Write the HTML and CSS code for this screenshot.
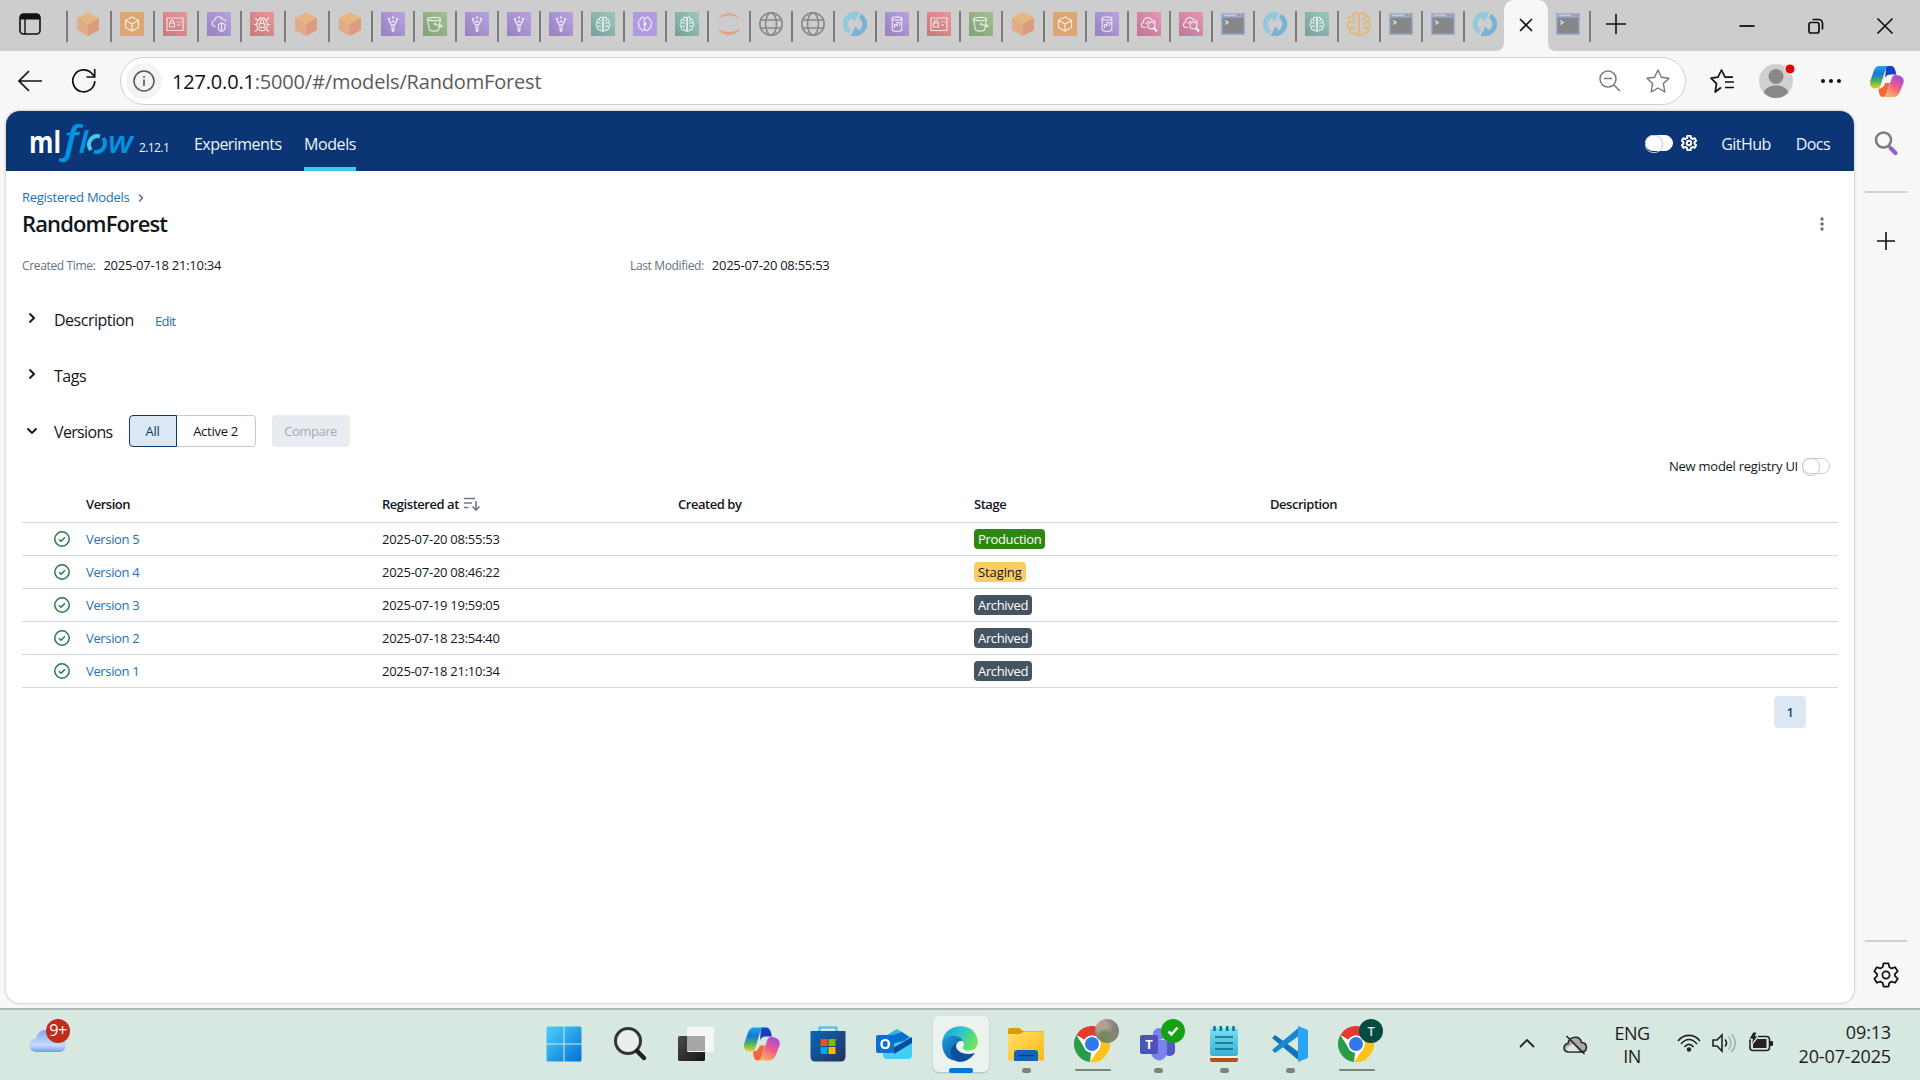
FILE: index.html
```html
<!DOCTYPE html>
<html lang="en">
<head>
<meta charset="utf-8">
<title>RandomForest - MLflow Model</title>
<link rel="stylesheet" href="styles.css">
</head>
<body>
<svg class="sprite" aria-hidden="true">
  <defs>
    <linearGradient id="g-purple" x1="0" y1="1" x2="1" y2="0"><stop offset="0" stop-color="#9580bd"/><stop offset="1" stop-color="#bba3e2"/></linearGradient>
    <linearGradient id="g-red" x1="0" y1="1" x2="1" y2="0"><stop offset="0" stop-color="#c8757c"/><stop offset="1" stop-color="#e79a9b"/></linearGradient>
    <linearGradient id="g-green" x1="0" y1="1" x2="1" y2="0"><stop offset="0" stop-color="#819f77"/><stop offset="1" stop-color="#a5c28f"/></linearGradient>
    <linearGradient id="g-teal" x1="0" y1="1" x2="1" y2="0"><stop offset="0" stop-color="#779f99"/><stop offset="1" stop-color="#9bc8be"/></linearGradient>
    <linearGradient id="g-pink" x1="0" y1="1" x2="1" y2="0"><stop offset="0" stop-color="#c07498"/><stop offset="1" stop-color="#e39ab4"/></linearGradient>
    <linearGradient id="g-win" x1="0" y1="0" x2="1" y2="1"><stop offset="0" stop-color="#4fd0ff"/><stop offset="1" stop-color="#0072d2"/></linearGradient>
    <linearGradient id="g-cpl" x1="0" y1="0" x2="0" y2="1"><stop offset="0" stop-color="#1ea7e8"/><stop offset=".35" stop-color="#1677d8"/><stop offset=".65" stop-color="#43b06c"/><stop offset="1" stop-color="#f4d01c"/></linearGradient>
    <linearGradient id="g-cpr" x1=".8" y1="0" x2=".3" y2="1"><stop offset="0" stop-color="#a049e8"/><stop offset=".5" stop-color="#f0598c"/><stop offset="1" stop-color="#ffb357"/></linearGradient>
    <linearGradient id="g-edge" x1="0" y1="0" x2="1" y2=".5"><stop offset="0" stop-color="#1e9fe0"/><stop offset=".5" stop-color="#2cc3d2"/><stop offset="1" stop-color="#6be556"/></linearGradient>
    <linearGradient id="g-edge2" x1="0" y1="0" x2="1" y2="1"><stop offset="0" stop-color="#1b9de2"/><stop offset="1" stop-color="#0c4c96"/></linearGradient>
    <linearGradient id="g-store" x1="0" y1="0" x2="1" y2="1"><stop offset="0" stop-color="#0a67bd"/><stop offset="1" stop-color="#27305a"/></linearGradient>
    <linearGradient id="g-folder" x1="0" y1="0" x2="1" y2="1"><stop offset="0" stop-color="#ffdf6b"/><stop offset="1" stop-color="#fdb913"/></linearGradient>
    <linearGradient id="g-dark" x1="0" y1="0" x2="1" y2="1"><stop offset="0" stop-color="#4c4b48"/><stop offset="1" stop-color="#151515"/></linearGradient>
    <linearGradient id="g-cloud" x1="0" y1="0" x2="0" y2="1"><stop offset="0" stop-color="#7fa7ee"/><stop offset=".7" stop-color="#c7daf8"/><stop offset="1" stop-color="#6f9df0"/></linearGradient>
    <linearGradient id="g-note" x1="0" y1="0" x2="0" y2="1"><stop offset="0" stop-color="#7ddff2"/><stop offset="1" stop-color="#36b2d0"/></linearGradient>
    <g id="lobe"><path d="M12 6.500C11.500 4.500 8.500 4.500 8.300 7 6 7 5.300 9.300 6.500 10.700 4.600 11.500 4.600 14 6.400 14.800 5.800 17.200 8 18.500 9.300 17.600 10 20 12 19.500 12 18ZM8.300 7C8.300 8.500 9.300 9 10.200 8.800M6.500 10.700C8 10.200 9.500 11 9.300 12.500M6.400 14.800C7.500 13.500 9 14 9.600 15.200"/></g>
  </defs>
  <symbol id="cube" viewBox="0 0 24 24"><path fill="#e4b681" d="M12 0 23 6 12 12 1 6Z"/><path fill="#e0ab86" d="M1 6 12 12V24L1 18Z"/><path fill="#dc9b7f" d="M23 6 12 12V24L23 18Z"/></symbol>
  <symbol id="box" viewBox="0 0 24 24"><path fill="#dca572" d="M0 0H24V24H0Z"/><path class="w" d="M12 5 18.500 8.300V15.500L12 19 5.500 15.500V8.300ZM5.500 8.300 12 12l6.500-3.700M12 12v7"/></symbol>
  <symbol id="card" viewBox="0 0 24 24"><path fill="url(#g-red)" d="M0 0H24V24H0Z"/><path class="w" d="M4 6H20V18.500H4ZM6.500 11H11.500V15H6.500ZM7.500 11V9.500a1.500 1.500 0 0 1 3 0V11M14 10h1.500M16.500 10H18M14 13h3"/></symbol>
  <symbol id="cloudp" viewBox="0 0 24 24"><path fill="url(#g-purple)" d="M0 0H24V24H0Z"/><path class="w" d="M8.500 14.500C4 14 4 9 7.500 8.500 8 4 14.500 3.500 15.500 7.500 18 7.500 19 8.500 19 10M11.500 12.500 14.500 11 18 12.500V16c0 2-2 3-3.300 3.500C13 19 11.500 18 11.500 16ZM14.600 11V19"/></symbol>
  <symbol id="bug" viewBox="0 0 24 24"><path fill="url(#g-red)" d="M0 0H24V24H0Z"/><path class="w" d="M9.500 11.500H14.500V15.500H9.500ZM10.500 11.500V9.500a1.500 1.500 0 0 1 3 0v2"/><ellipse class="w" cx="12" cy="12.500" rx="5.300" ry="6.300"/><path class="w" d="M5 6 8 8.500M19 5.500 16 8.500M5 19.500 8 17M19 19.500 16 17M4 12.500H6.500M17.500 12.500H20M10 5V6.500M14 5V6.500"/></symbol>
  <symbol id="glue" viewBox="0 0 24 24"><path fill="url(#g-purple)" d="M0 0H24V24H0Z"/><path class="w" d="M7.500 8 11 14V17H13V14L16.500 8M9 10h6M10.500 12.500h3"/><g fill="#e6e0ef"><circle cx="8" cy="7" r="1.300"/><circle cx="12" cy="5.500" r="1.200"/><circle cx="16" cy="7" r="1.300"/><circle cx="12" cy="9" r="1"/><circle cx="12" cy="18.500" r="1.500"/></g></symbol>
  <symbol id="bucket" viewBox="0 0 24 24"><path fill="url(#g-green)" d="M0 0H24V24H0Z"/><ellipse class="w" cx="11" cy="7" rx="6.500" ry="1.700"/><path class="w" d="M4.500 7 6.500 18c2 1.500 7 1.500 9 0L17.500 7M12 12l6 2.500c2 .5 1-1-1-2"/><circle cx="12" cy="12" r="1.200" fill="#e6ebe2"/></symbol>
  <symbol id="brain" viewBox="0 0 24 24"><path fill="url(#g-teal)" d="M0 0H24V24H0Z"/><use href="#lobe" class="w"/><use href="#lobe" class="w" transform="matrix(-1 0 0 1 24 0)"/></symbol>
  <symbol id="braino" viewBox="0 0 24 24"><g transform="translate(-7.800 -7.200) scale(1.650 1.600)" fill="none" stroke="#e2b77c" stroke-width="1.100"><use href="#lobe"/><use href="#lobe" transform="matrix(-1 0 0 1 24 0)"/></g></symbol>
  <symbol id="brain2" viewBox="0 0 24 24"><path fill="#b29ae4" d="M0 0H24V24H0Z"/><path class="w" d="M11.500 7C11 4 7.500 5 7.500 7.500 5 8.500 5 11.500 6 12.500 5 15 7 16.500 8 16.500 8.500 19.500 11.500 19 11.500 17V7M12.500 7C13 4 16.500 5 16.500 7.500 19 8.500 19 11.500 18 12.500 19 15 17 16.500 16 16.500 15.500 19.500 12.500 19 12.500 17"/><circle cx="12" cy="12" r="1.700" fill="#eee8fa"/></symbol>
  <symbol id="jup" viewBox="0 0 24 24"><path fill="#dea583" d="M1 7.500C4-1 20-1 23 7.500 17 2 7 2 1 7.500ZM1 16.500C4 25 20 25 23 16.500 17 21 7 21 1 16.500Z"/></symbol>
  <symbol id="globe" viewBox="0 0 24 24"><g fill="none" stroke="#858585" stroke-width="1.500"><circle cx="12" cy="12" r="11.200"/><ellipse cx="12" cy="12" rx="5.500" ry="11.200"/><path d="M2 8H22M2 16H22"/></g></symbol>
  <symbol id="sync" viewBox="0 0 24 24"><path fill="none" stroke="#8fc9db" stroke-width="5" d="M7 20.200A9.500 9.500 0 0 1 12.500 2.500"/><path fill="#8fc9db" d="M9 0H16.500L11.500 9.500 8.500 6Z"/><path fill="none" stroke="#79b2d6" stroke-width="5" d="M17 3.800A9.500 9.500 0 0 1 11.500 21.500"/><path fill="#79b2d6" d="M15 24H7.500L12.500 14.500 15.500 18Z"/></symbol>
  <symbol id="db" viewBox="0 0 24 24"><path fill="url(#g-purple)" d="M0 0H24V24H0Z"/><ellipse class="w" cx="12" cy="6.500" rx="4.800" ry="1.600"/><path class="w" d="M7.200 6.500V18c2 2 7.500 2 9.600 0V6.500M9.500 16V12.500L12 13.500V10.500H15L14.500 14"/></symbol>
  <symbol id="csearch" viewBox="0 0 24 24"><path fill="url(#g-pink)" d="M0 0H24V24H0Z"/><path class="w" d="M9.500 15.500H7C3.500 15 3.500 11 6.500 10.500 6 5.500 13 4 14.500 8c2 0 4 1 4 3M12 9a4 4 0 0 0-3 3"/><circle class="w" cx="14.500" cy="13.500" r="3.400"/><path class="w2" d="m17 16 3 3.500"/></symbol>
  <symbol id="term" viewBox="0 0 24 24"><path fill="#9aaecd" d="M0 1H24V23H0Z"/><path fill="#878787" d="M1.500 5.500H22.500V21.500H1.500Z"/><path d="M3 3.200H15" stroke="#bfc9dc" stroke-width="1.500"/><path d="M16 3.200h3M20 3.200h2.500" stroke="#c98a92" stroke-width="2"/><path d="M4 8.500 7 10.500 4 12.500" fill="none" stroke="#ddd" stroke-width="1.500"/></symbol>
  <symbol id="copilot" viewBox="0 0 36 33"><path fill="#153fc4" d="M17 0H22C25 0 26 2 27 5L28 9H22C19 9 17 10 16 13Z"/><path fill="url(#g-cpl)" d="M10 0H20C17 1 16 4 15 8L11.500 20C10.500 23 9 24 6 24 1 24-1 20 .500 15L4 5C5 2 7 0 10 0Z"/><path fill="#f5683c" d="M9 24C13 24 15 21 16 18H21L17 31C16.500 32 15 33 13.500 33 10 33 9.500 29 9 24Z"/><path fill="url(#g-cpr)" d="M27 9.500C33 9.500 37 13 35.500 18L31.500 28C30 31.500 28 33 25 33H14C17 32 18 29 19.500 24L23 13C24 10.500 25 9.500 27 9.500Z"/></symbol>
  <symbol id="chrome" viewBox="0 0 36 36"><circle cx="18" cy="18" r="18" fill="#fff"/><path fill="#e33b2e" d="M18 18 2.400 9A18 18 0 0 1 33.600 9Z"/><path fill="#2a9b48" d="M18 18 16 36A18 18 0 0 1 2.400 9L10 21Z"/><path fill="#fcc31d" d="M25 9H33.600A18 18 0 0 1 16 36L25.500 22Z"/><circle cx="18" cy="18" r="8.800" fill="#fff"/><circle cx="18" cy="18" r="7" fill="#3078ec"/></symbol>
  <symbol id="check" viewBox="0 0 16 16"><g fill="none" stroke="#277c43" stroke-width="1.500"><circle cx="8" cy="8" r="7.200"/><path d="m5 8.200 2 2 4-4"/></g></symbol>
  <symbol id="right" viewBox="0 0 16 16"><path d="m5.500 3.500 4.500 4.500-4.500 4.500" fill="none" stroke="currentColor" stroke-width="1.900"/></symbol>
  <symbol id="gear" viewBox="0 0 24 24"><path d="M9.700 1.200H14.300L15 4.600 17.200 5.900 20.500 4.800 22.800 8.700 20.300 11V13L22.800 15.300 20.500 19.200 17.200 18.100 15 19.400 14.300 22.800H9.700L9 19.400 6.800 18.100 3.500 19.200 1.200 15.300 3.700 13V11L1.200 8.700 3.500 4.800 6.800 5.900 9 4.600Z" stroke-linejoin="round"/><circle cx="12" cy="12" r="3.300"/></symbol>
</svg>

<header class="tabstrip">
  <svg class="workspace" viewBox="0 0 22 22"><rect x="1" y="1" width="20" height="20" rx="3.500" fill="none" stroke="#111" stroke-width="1.600"/><path d="M1 4.500A3.500 3.500 0 0 1 4.500 1H17.500A3.500 3.500 0 0 1 21 4.500V6.500H1Z" fill="#111"/><path d="M6 6V21" stroke="#111" stroke-width="1.400"/></svg>
  <div class="tabs wide">
    <i><svg><use href="#cube"/></svg></i><i><svg><use href="#box"/></svg></i><i><svg><use href="#card"/></svg></i><i><svg><use href="#cloudp"/></svg></i><i><svg><use href="#bug"/></svg></i><i><svg><use href="#cube"/></svg></i><i><svg><use href="#cube"/></svg></i>
  </div>
  <div class="tabs">
    <i><svg><use href="#glue"/></svg></i><i><svg><use href="#bucket"/></svg></i><i><svg><use href="#glue"/></svg></i><i><svg><use href="#glue"/></svg></i><i><svg><use href="#glue"/></svg></i><i><svg><use href="#brain"/></svg></i><i><svg><use href="#brain2"/></svg></i><i><svg><use href="#brain"/></svg></i><i><svg><use href="#jup"/></svg></i><i><svg><use href="#globe"/></svg></i><i><svg><use href="#globe"/></svg></i><i><svg><use href="#sync"/></svg></i><i><svg><use href="#db"/></svg></i><i><svg><use href="#card"/></svg></i><i><svg><use href="#bucket"/></svg></i><i><svg><use href="#cube"/></svg></i><i><svg><use href="#box"/></svg></i><i><svg><use href="#db"/></svg></i><i><svg><use href="#csearch"/></svg></i><i><svg><use href="#csearch"/></svg></i><i><svg><use href="#term"/></svg></i><i><svg><use href="#sync"/></svg></i><i><svg><use href="#brain"/></svg></i><i><svg><use href="#braino"/></svg></i><i><svg><use href="#term"/></svg></i><i><svg><use href="#term"/></svg></i><i><svg><use href="#sync"/></svg></i>
  </div>
  <div class="active-tab"><svg viewBox="0 0 60 51"><path d="M0 51C6 51 8 47 8 41V12C8 4 12 0 19 0H41C48 0 52 4 52 12V41C52 47 54 51 60 51Z" fill="#f7f7f7"/><path d="m24 19 12 12M36 19 24 31" stroke="#111" stroke-width="1.600"/></svg></div>
  <div class="tabs last"><i><svg><use href="#term"/></svg></i></div>
  <svg class="newtab" viewBox="0 0 20 20"><path d="M10 0V20M0 10H20" stroke="#111" stroke-width="1.600"/></svg>
  <div class="winctl">
    <svg viewBox="0 0 16 16"><path d="M.500 8H15.500" stroke="#111" stroke-width="1.800"/></svg>
    <svg viewBox="0 0 16 16"><rect x="1" y="4.500" width="10" height="10.500" rx="2" fill="none" stroke="#111" stroke-width="1.700"/><path d="M4.500 1.500H10.500A4 4 0 0 1 14.500 5.500V11.500" fill="none" stroke="#111" stroke-width="1.700"/></svg>
    <svg viewBox="0 0 16 16"><path d="m.500.500 15 15M15.500.500.500 15.500" stroke="#111" stroke-width="1.700"/></svg>
  </div>
</header>

<div class="toolbar">
  <svg class="back" viewBox="0 0 24 22"><path d="M24 11H1M11 1 1 11 11 21" fill="none" stroke="#111" stroke-width="1.700"/></svg>
  <svg class="reload" viewBox="0 0 24 24"><path d="M22.800 12A11 11 0 1 1 19.500 4L22.500 7.500M22.700 0V8H14.500" fill="none" stroke="#111" stroke-width="1.700"/></svg>
  <div class="address">
    <span class="info"><svg viewBox="0 0 22 22"><circle cx="11" cy="11" r="10" fill="none" stroke="#555" stroke-width="1.500"/><path d="M11 9.500V16M11 6V7.800" stroke="#555" stroke-width="1.600"/></svg></span>
    <span class="url"><b>127.0.0.1</b>:5000/#/models/RandomForest</span>
    <svg class="zoomout" viewBox="0 0 22 22"><circle cx="9" cy="9" r="8" fill="none" stroke="#777" stroke-width="1.500"/><path d="M5 8.500H13M14.500 14.500 21 21" stroke="#777" stroke-width="1.500"/></svg>
    <svg class="star" viewBox="0 0 24 24"><path d="m12 1 3.400 7.200 7.600 1-5.600 5.400L18.800 23 12 19 5.200 23 6.600 14.600 1 9.200l7.600-1Z" fill="none" stroke="#777" stroke-width="1.400" stroke-linejoin="round"/></svg>
  </div>
  <svg class="favs" viewBox="0 0 24 24"><path d="M11 18.500 5.200 23 6.500 14.600 1 9.200l7-1L11.500 1 15 8.200H23M15 13H24M15 18.500H24" fill="none" stroke="#111" stroke-width="1.700" stroke-linejoin="round"/></svg>
  <svg class="avatar" viewBox="0 0 38 38"><circle cx="17" cy="21" r="17" fill="#d2d0ce"/><circle cx="17" cy="16.500" r="7.500" fill="#8a8886"/><path d="M5 33C6 23 28 23 29 33A17 17 0 0 1 5 33Z" fill="#8a8886"/><circle cx="31" cy="9" r="5" fill="#e60000" stroke="#f7f7f7" stroke-width="1"/></svg>
  <svg class="dots" viewBox="0 0 20 4"><g fill="#111"><circle cx="2" cy="2" r="2"/><circle cx="10" cy="2" r="2"/><circle cx="18" cy="2" r="2"/></g></svg>
  <svg class="cop"><use href="#copilot"/></svg>
</div>

<div class="middle">
  <main class="page">
    <nav class="mlnav">
      <svg class="logo" viewBox="0 0 108 44"><text class="lt" x="0" y="34" textLength="32" lengthAdjust="spacingAndGlyphs">ml</text><text class="lt fl" x="35" y="34" textLength="24" lengthAdjust="spacingAndGlyphs"><tspan class="f">f</tspan><tspan>l</tspan></text><text class="lt fl" x="79" y="34" textLength="25" lengthAdjust="spacingAndGlyphs">w</text><g fill="none" stroke-width="4"><path d="M62 31A8.500 8.500 0 0 1 71 17.500" stroke="#43c9ed"/><path d="M74 19A8.500 8.500 0 0 1 65 32.500" stroke="#0194e2"/></g></svg>
      <span class="ver">2.12.1</span>
      <a class="navlink exp">Experiments</a>
      <a class="navlink on">Models</a>
      <span class="grow"></span>
      <span class="switch solid"></span>
      <svg class="navgear"><use href="#gear"/></svg>
      <a class="navlink gh">GitHub</a>
      <a class="navlink docs">Docs</a>
    </nav>
    <div class="content">
      <div class="crumb"><a>Registered Models</a><svg><use href="#right"/></svg></div>
      <div class="titlebar"><h1>RandomForest</h1><svg class="kebab" viewBox="0 0 4 14"><g fill="#5f7281"><circle cx="2" cy="2" r="1.700"/><circle cx="2" cy="7" r="1.700"/><circle cx="2" cy="12" r="1.700"/></g></svg></div>
      <div class="meta">
        <div><span class="lab">Created Time:</span><span>2025-07-18 21:10:34</span></div>
        <div><span class="lab">Last Modified:</span><span>2025-07-20 08:55:53</span></div>
      </div>
      <section class="fold"><svg><use href="#right"/></svg><span class="ft">Description</span><a class="edit">Edit</a></section>
      <section class="fold"><svg><use href="#right"/></svg><span class="ft">Tags</span></section>
      <section class="fold open"><svg><use href="#right"/></svg><span class="ft">Versions</span>
        <div class="seg"><span class="sel">All</span><span>Active 2</span></div>
        <span class="compare">Compare</span></section>
      <div class="registry"><span>New model registry UI</span><span class="switch"></span></div>
      <div class="table">
        <div class="row head"><span></span><span>Version</span><span>Registered at<svg class="sort" viewBox="0 0 16 14"><path d="M0 1.500H11M0 6H8M0 10.500H4.500M12 4V12.500M8.500 9.500 12 13 15.500 9.500" fill="none" stroke="#6b7d8c" stroke-width="1.600"/></svg></span><span>Created by</span><span>Stage</span><span>Description</span></div>
        <div class="row"><svg><use href="#check"/></svg><a>Version 5</a><span>2025-07-20 08:55:53</span><span></span><span><mark class="prod">Production</mark></span></div>
        <div class="row"><svg><use href="#check"/></svg><a>Version 4</a><span>2025-07-20 08:46:22</span><span></span><span><mark class="stag">Staging</mark></span></div>
        <div class="row"><svg><use href="#check"/></svg><a>Version 3</a><span>2025-07-19 19:59:05</span><span></span><span><mark>Archived</mark></span></div>
        <div class="row"><svg><use href="#check"/></svg><a>Version 2</a><span>2025-07-18 23:54:40</span><span></span><span><mark>Archived</mark></span></div>
        <div class="row"><svg><use href="#check"/></svg><a>Version 1</a><span>2025-07-18 21:10:34</span><span></span><span><mark>Archived</mark></span></div>
      </div>
      <div class="pager"><span>1</span></div>
    </div>
  </main>
  <aside class="side">
    <svg class="sfind" viewBox="0 0 24 24"><path d="m15 15 2 3" stroke="#777" stroke-width="3"/><circle cx="9.500" cy="9" r="7.500" fill="#fafafa" stroke="#7d7d7d" stroke-width="2.600"/><path d="m17 17.500 4.500 4.500" stroke="#9260cc" stroke-width="4.200" stroke-linecap="round"/></svg>
    <hr>
    <svg class="splus" viewBox="0 0 18 18"><path d="M9 0V18M0 9H18" stroke="#111" stroke-width="1.600"/></svg>
    <span class="grow"></span>
    <hr class="low">
    <svg class="sgear"><use href="#gear"/></svg>
  </aside>
</div>

<footer class="taskbar">
  <div class="weather"><svg viewBox="0 0 38 36"><path fill="url(#g-cloud)" d="M7 35C-2 34-2 22 7 21.500 9 11 23 9 27 20 39 18 40 34 31 35Z"/></svg><span>9+</span></div>
  <div class="apps">
    <i><svg viewBox="0 0 36 36"><path fill="url(#g-win)" d="M2 .500H17.500V17.500H.500V2A1.500 1.500 0 0 1 2 .500ZM18.500.500H34A1.500 1.500 0 0 1 35.500 2V17.500H18.500ZM.500 18.500H17.500V35.500H2A1.500 1.500 0 0 1 .500 34ZM18.500 18.500H35.500V34A1.500 1.500 0 0 1 34 35.500H18.500Z"/></svg></i>
    <i><svg viewBox="0 0 36 36"><circle cx="16" cy="15" r="12.500" fill="#e6efeb" stroke="#333" stroke-width="3"/><path d="m25 25 7 7" stroke="#222" stroke-width="4.500" stroke-linecap="round"/></svg></i>
    <i><svg viewBox="0 0 36 36"><rect x="0" y="10" width="27" height="25" rx="1.500" fill="url(#g-dark)"/><rect x="9" y="1" width="27" height="25" rx="1" fill="#f5f6f6"/><path fill="#a5a6a5" d="M9 10H27V25H9Z"/></svg></i>
    <i><svg><use href="#copilot"/></svg></i>
    <i><svg viewBox="0 0 36 36"><path d="M9.500 8V1.500H26.500V8" fill="none" stroke="#32c1f2" stroke-width="2"/><path fill="url(#g-store)" d="M.500 5H35.500V31A4.500 4.500 0 0 1 31 35.500H5A4.500 4.500 0 0 1 .500 31Z"/><path fill="#f25022" d="M10.500 13H17.500V20H10.500Z"/><path fill="#7fba00" d="M18.500 13H25.500V20H18.500Z"/><path fill="#00a4ef" d="M10.500 21H17.500V28H10.500Z"/><path fill="#ffb900" d="M18.500 21H25.500V28H18.500Z"/></svg></i>
    <i><svg viewBox="0 0 36 36"><path fill="#32b5ea" d="M6 12 21 3 35.500 12 20 22Z"/><path fill="#0a6fcb" d="m12 11 14-5 7 5-13 10Z"/><path fill="#45cdf5" d="M7 20 36 13V29A4 4 0 0 1 32 33H10A4 4 0 0 1 7 29Z"/><path fill="#0b4a9e" d="M17 22 36 11V17L18 28Z"/><rect y="9" width="18" height="18" rx="2" fill="#0f6fce"/><text x="9" y="23" class="ico" font-size="14">O</text></svg></i>
    <i class="cur"><svg viewBox="0 0 36 36"><path fill="url(#g-edge)" d="M.500 15C3-4 34-5 35.700 15 36 22 31 25.500 24 24.500 20 23.500 21 21 22 19 22 12 9 8 .500 15Z"/><path fill="url(#g-edge2)" d="M.500 14.500C6 7 18 9 21 15 13 13 10 28 21 31 16 36.500 9 35 5 31 1 26-.500 21 .500 14.500Z"/><path fill="#0c4f9c" d="M14 18C13 26 23 30 33 27 29 33 22 37 15 35.500 6 31 8 20 14 18Z"/></svg><u class="blue"></u></i>
    <i><svg viewBox="0 0 36 36"><path fill="#dd9a05" d="M0 4A2 2 0 0 1 2 2H11L15 5H34A2 2 0 0 1 36 7V10H0Z"/><path fill="url(#g-folder)" d="M0 8H12L16 5.500H36V34.500H0Z"/><path fill="#0f66b9" d="M6 35V27A3 3 0 0 1 9 24H27A3 3 0 0 1 30 27V35Z"/><path d="M10 29.500H26" stroke="#083f7d" stroke-width="1.500"/></svg><u></u></i>
    <i><svg><use href="#chrome"/></svg><b class="ph"></b><u class="line"></u></i>
    <i><svg viewBox="0 0 36 36"><circle cx="19" cy="8" r="6" fill="#7b83eb"/><rect x="24" y="14" width="11" height="16" rx="5" fill="#5059c9"/><path fill="#7b83eb" d="M11 14H27V25C27 38 11 37 11 25Z"/><rect y="9" width="18" height="19" rx="2" fill="#4b53bc"/><text x="9" y="23" class="ico" font-size="13">T</text></svg><b class="ok"><svg viewBox="0 0 24 24"><path d="m7.500 12.500 3 3 6-7" fill="none" stroke="#fff" stroke-width="2.500"/></svg></b><u></u></i>
    <i><svg viewBox="0 0 36 36"><path fill="#b55013" d="M4 31H32V34A2 2 0 0 1 30 36H6A2 2 0 0 1 4 34Z"/><path fill="#f2f2f2" d="M4 29H32V32H4Z"/><rect x="4" y="2" width="28" height="28" rx="2" fill="url(#g-note)"/><path d="M9 11H27M9 17H27M9 23H27" stroke="#086a8d" stroke-width="1.700"/><path d="M8.500 0V5M14.800 0V5M21.200 0V5M27.500 0V5" stroke="#1a6c8c" stroke-width="2.500"/></svg><u></u></i>
    <i><svg viewBox="0 0 36 36"><path fill="#0f72bd" d="M0 12 3 9 28 27V35.500Z"/><path fill="#1a86d2" d="M0 24 3 27 28 9V.500Z"/><path fill="#29a4f0" d="M26 0 36 4V32L26 36Z"/></svg><u></u></i>
    <i><svg><use href="#chrome"/></svg><b class="tt">T</b><u class="line"></u></i>
  </div>
  <div class="tray">
    <svg class="up" viewBox="0 0 16 10"><path d="m1 9 7-7 7 7" fill="none" stroke="#222" stroke-width="1.800"/></svg>
    <svg class="cl" viewBox="0 0 24 20"><path d="M5 17C-.500 16.500 0 9 5 8.500 6 1 17 0 18.500 7.500 25 8 25 16.500 19 17Z" fill="#a8aaa9" stroke="#222" stroke-width="1.500"/><path d="M3 13 10 9 16 16.200H5Z" fill="#e4e6e5"/><path d="m3.500 1 18 18" stroke="#222" stroke-width="1.600"/></svg>
    <div class="lang">ENG<br>IN</div>
    <svg class="wifi" viewBox="0 0 24 18"><g fill="none" stroke="#222" stroke-width="1.600"><path d="M1 7C7-.500 17-.500 23 7M4 10C9 4 15 4 20 10M7.500 13C10.500 9.500 13.500 9.500 16.500 13"/></g><circle cx="12" cy="15.500" r="2.200" fill="#222"/></svg>
    <svg class="vol" viewBox="0 0 26 20"><g fill="none" stroke="#222" stroke-width="1.600"><path d="M1 7H5L10 2V18L5 13H1ZM13 6.500Q16 10 13 13.500"/><g stroke="#a5b3ad"><path d="M16.500 3.500Q21.500 10 16.500 16.500M19.500 1Q27 10 19.500 19"/></g></g></svg>
    <svg class="bat" viewBox="0 0 24 20"><rect x="1" y="4.500" width="19.500" height="14" rx="3" fill="none" stroke="#222" stroke-width="1.600"/><path d="M4 16V12L8 7H17.500V16ZM21 9H23A1 1 0 0 1 24 10V13A1 1 0 0 1 23 14H21Z" fill="#222"/><path d="M4 0H8L6.500 4H9L2 13 3.500 7H0Z" fill="#222" stroke="#d7e8e1"/></svg>
    <div class="clock">09:13<br>20-07-2025</div>
  </div>
</footer>
</body>
</html>
```
FILE: styles.css
```css
* { box-sizing: border-box; }
body { margin: 0; width: 1920px; height: 1080px; overflow: hidden; display: flex; flex-direction: column; background: #f7f7f7; color: #11171c; font-family: "Open Sans", "Noto Sans", sans-serif; font-size: 13px; letter-spacing: -.26px; }
.sprite { position: absolute; width: 0; height: 0; }
svg { display: block; flex: none; overflow: visible; }
i { font-style: normal; }
.w { fill: none; stroke: #fff; stroke-opacity: .75; stroke-width: 1.2; }
.w2 { fill: none; stroke: #fff; stroke-opacity: .75; stroke-width: 2.4; }
.grow { flex: 1; }

.tabstrip { height: 51px; background: #cdcdcd; display: flex; align-items: flex-start; }
.workspace { width: 22px; height: 22px; margin: 13px 24px 0 19px; }
.tabs { display: flex; padding-top: 11px; }
.tabs i { width: 42px; height: 31px; border-left: 2px solid #7b7b7b; padding: 1px 0 0 8px; }
.tabs.wide { margin-left: 1px; }
.tabs.wide i { width: 43.6px; }
.tabs svg { width: 24px; height: 24px; }
.active-tab { width: 60px; height: 51px; margin: 0 0 0 -9px; }
.active-tab svg { width: 60px; height: 51px; }
.tabs.last i { border-left: 0; border-right: 2px solid #7b7b7b; padding-left: 0; width: 35px; }
.newtab { width: 20px; height: 20px; margin: 14px 0 0 15px; }
.winctl { flex: 1; display: flex; justify-content: flex-end; gap: 53px; padding: 18px 27px 0 0; }
.winctl svg { width: 16px; height: 16px; }

.toolbar { height: 60px; display: flex; align-items: center; }
.back { width: 24px; height: 22px; margin-left: 18px; }
.reload { width: 24px; height: 24px; margin-left: 30px; }
.address { width: 1566px; height: 48px; margin-left: 24px; background: #fff; border: 1.5px solid #d1d1d1; border-radius: 24px; display: flex; align-items: center; }
.info { width: 36px; height: 36px; border-radius: 18px; background: #f3f3f3; margin-left: 5px; display: flex; align-items: center; justify-content: center; }
.info svg { width: 22px; height: 22px; }
.url { margin-left: 10px; flex: 1; font-size: 20px; color: #5b5b5b; letter-spacing: -.18px; }
.url b { font-weight: 400; color: #111; }
.zoomout { width: 22px; height: 22px; }
.star { width: 24px; height: 24px; margin: 0 15px 0 25px; }
.favs { width: 24px; height: 24px; margin-left: 24px; }
.avatar { width: 38px; height: 38px; margin: -4px 0 0 25px; }
.dots { width: 20px; height: 4px; margin-left: 24px; }
.cop { width: 34px; height: 31px; margin-left: 29px; }

.middle { height: 897px; display: flex; }
.page { width: 1848px; height: 892px; margin-left: 6px; background: #fff; border-radius: 14px; overflow: hidden; box-shadow: 0 0 3px rgba(0,0,0,.3); }
.mlnav { height: 60px; background: #0b3574; color: #eef3fa; display: flex; align-items: stretch; }
.logo { width: 108px; height: 44px; margin: 8px 0 0 23px; }
.lt { font-family: "Open Sans", sans-serif; font-weight: 700; font-size: 31px; fill: #fff; letter-spacing: 0; }
.lt.fl { fill: #0194e2; font-style: italic; font-weight: 600; }
.lt .f { font-size: 38px; }
.ver { width: 30px; font-size: 12px; letter-spacing: -.6px; padding-top: 28px; margin-left: 2px; }
.navlink { font-size: 16px; line-height: 22px; padding-top: 22px; letter-spacing: -.55px; }
.exp { width: 86px; margin: 0 24px 0 25px; }
.on { width: 52px; border-bottom: 4px solid #43c9ed; letter-spacing: -.4px; }
.switch { width: 28px; height: 16px; border: 1px solid #c0cdd8; border-radius: 8px; background: #fff; display: block; }
.switch::before { content: ""; display: block; width: 16px; height: 16px; margin: -1px; border: 1px solid #c0cdd8; border-radius: 8px; }
.switch.solid { margin-top: 24px; border-color: #fff; }
.navgear { width: 16px; height: 16px; margin: 24px 24px 0 8px; fill: none; stroke: #fff; stroke-width: 3; }
.docs { margin: 0 24px 0 25px; }

.content { padding: 16px 16px 0 16px; }
a { color: #2272b4; }
.mlnav a { color: #eef3fa; }
.crumb { height: 20px; display: flex; align-items: center; gap: 5px; }
.crumb svg { width: 12px; height: 12px; margin-top: 2px; color: #5f7281; }
.titlebar { height: 32px; display: flex; align-items: center; justify-content: space-between; padding-right: 14px; }
h1 { font-size: 22px; font-weight: 600; margin: 0; letter-spacing: -.87px; }
.kebab { width: 4px; height: 14px; margin-top: 2px; }
.meta { display: grid; grid-template-columns: 608px 1fr; height: 20px; margin-top: 17px; line-height: 19px; }
.meta div { display: flex; gap: 8px; }
.lab { font-size: 12px; color: #5f7281; letter-spacing: -.35px; }
.fold { height: 32px; display: flex; align-items: center; margin-top: 24px; }
.meta + .fold { margin-top: 28px; }
.fold > svg { width: 16px; height: 16px; margin: -4px 14px 0 2px; }
.fold.open { margin-top: 23px; }
.fold.open > svg { transform: rotate(90deg); margin-top: 0; }
.ft { font-size: 16px; letter-spacing: -.5px; }
.open .ft { letter-spacing: -.65px; padding-top: 2px; }
.edit { margin: 2px 0 0 21px; letter-spacing: -.6px; }
.seg { display: flex; margin-left: 16px; }
.seg span { height: 32px; width: 79px; border: 1px solid #c0cdd8; border-left: 0; border-radius: 0 4px 4px 0; display: flex; align-items: center; justify-content: center; }
.seg .sel { width: 48px; border: 1px solid #0e3a66; border-radius: 4px 0 0 4px; background: #dbe7f2; color: #0e3a66; }
.compare { width: 78px; height: 32px; margin-left: 16px; background: #e8ebef; color: #a0acb8; border-radius: 4px; display: flex; align-items: center; justify-content: center; letter-spacing: -.45px; }
.registry { height: 20px; margin-top: 9px; padding-right: 8px; display: flex; justify-content: flex-end; align-items: center; gap: 4px; }
.registry span:first-child { margin-top: -1px; }
.row { height: 33px; border-bottom: 1px solid #d1d9e1; display: grid; grid-template-columns: 64px 296px 296px 296px 296px 1fr; align-items: center; }
.row a { letter-spacing: -.35px; }
.head { height: 47px; font-weight: 600; padding-top: 9px; letter-spacing: -.46px; }
.head span { display: flex; align-items: center; gap: 5px; }
.row > svg { width: 16px; height: 16px; margin-left: 32px; }
.sort { width: 16px; height: 14px; }
.row > span > mark { display: inline-block; vertical-align: middle; height: 20px; line-height: 20px; padding: 0 4px; border-radius: 4px; background: #445461; color: #fff; letter-spacing: -.34px; }
.row > span > mark.prod { background: #2f8713; }
.row > span > mark.stag { background: #fbcb66; color: #11171c; letter-spacing: -.1px; }
.pager { display: flex; justify-content: flex-end; padding: 8px 32px 0 0; }
.pager span { width: 32px; height: 32px; border-radius: 4px; background: #dbe7f2; color: #0e3a66; font-weight: 600; font-size: 12px; line-height: 33px; text-align: center; }

.side { width: 66px; display: flex; flex-direction: column; align-items: center; padding: 20px 2px 20px 0; }
.sfind { width: 24px; height: 24px; }
.side hr { width: 42px; height: 2px; border: 0; background: #d1d1d1; margin: 36px 0 0; }
.splus { width: 18px; height: 18px; margin-top: 39px; }
.side .low { margin: 0 0 20px; }
.sgear { width: 26px; height: 26px; fill: none; stroke: #111; stroke-width: 1.6; }

.taskbar { height: 72px; border-top: 2px solid #adb8b2; background: #d7e8e1; display: flex; position: relative; }
.weather { width: 532px; padding: 7px 0 0 29px; position: relative; }
.weather svg { width: 38px; height: 36px; }
.weather span { position: absolute; left: 46px; top: 9px; width: 24px; height: 24px; border-radius: 12px; background: #c42b1c; color: #fff; font-size: 16px; line-height: 23px; text-align: center; letter-spacing: -.5px; }
.apps { display: flex; }
.apps i { width: 66px; height: 66px; padding: 16px 15px 0 14px; position: relative; }
.apps i > svg { width: 36px; height: 36px; }
.cur::before { content: ""; position: absolute; left: 5px; top: 6px; width: 56px; height: 56px; border-radius: 6px; background: #ebf3ef; box-shadow: 0 1px 2px rgba(0,0,0,.2); }
.cur svg { position: relative; }
.apps u { position: absolute; left: 28px; top: 58px; width: 9px; height: 5px; border-radius: 3px; background: #7b837f; }
.apps u.blue { left: 21px; width: 24px; background: #0078d4; }
.apps u.line { left: 15px; top: 59px; width: 36px; height: 2px; border-radius: 1px; }
.apps b { position: absolute; left: 35px; top: 9px; width: 24px; height: 24px; border-radius: 12px; font-size: 13px; line-height: 24px; text-align: center; color: #d5e5df; font-weight: 600; }
.ph { background: radial-gradient(circle at 40% 70%, #6f8a5b 15%, transparent 35%), radial-gradient(circle at 30% 30%, #b3a094 20%, transparent 50%), #85827a; }
.ok { background: #16a013; }
.ok svg { width: 24px; height: 24px; }
.tt { background: #064b41; }
.ico { fill: #fff; font-weight: 700; text-anchor: middle; font-family: "Open Sans", sans-serif; }
.tray { flex: 1; display: flex; color: #1c1c1c; font-size: 18px; line-height: 24px; letter-spacing: -.15px; }
.up { width: 16px; height: 10px; margin: 28px 0 0 129px; }
.cl { width: 24px; height: 20px; margin: 25px 0 0 28px; }
.lang { width: 60px; margin: 12px 0 0 15px; text-align: center; line-height: 23px; letter-spacing: -.5px; }
.wifi { width: 24px; height: 18px; margin: 24px 0 0 15px; }
.vol { width: 26px; height: 20px; margin: 23px 0 0 11px; }
.bat { width: 24px; height: 20px; margin: 22px 0 0 11px; }
.clock { flex: 1; text-align: right; margin: 10px 29px 0 0; }
```
